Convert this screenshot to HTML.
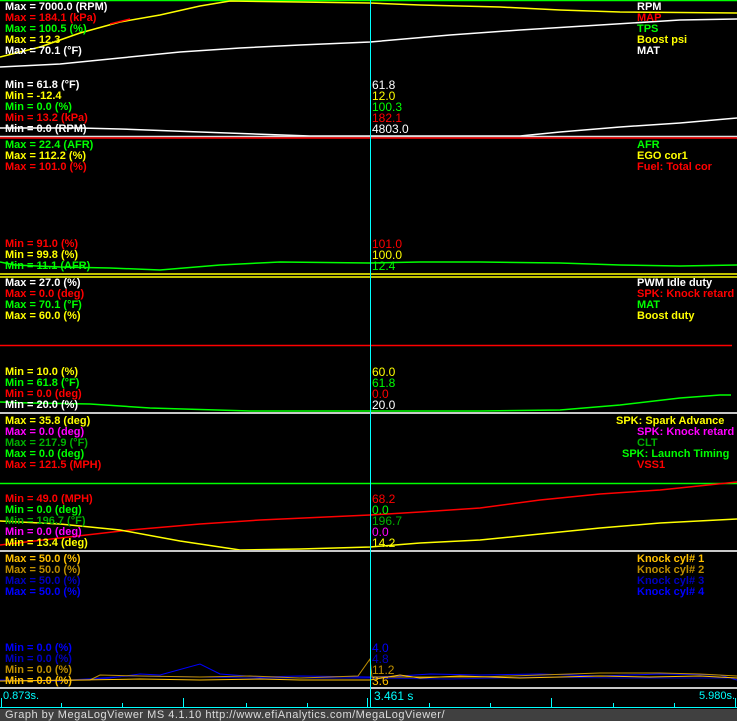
<!DOCTYPE html>
<html><head><meta charset="utf-8"><style>
body{margin:0;background:#000;width:737px;height:721px;overflow:hidden;position:relative;font-family:"Liberation Sans",sans-serif}
.t{position:absolute;font-size:11px;font-weight:bold;line-height:11px;white-space:nowrap;margin-top:1px}
.v{position:absolute;font-size:12px;line-height:11px;white-space:nowrap;left:372px;margin-top:1px}
svg{position:absolute;left:0;top:0}
.w{color:#fff}.r{color:#f00}.g{color:#0f0}.y{color:#ff0}.dg{color:#00b000}.m{color:#f0f}.o{color:#ffc000}.gd{color:#c09000}.db{color:#0000c0}.b{color:#0000ff}
</style></head><body>
<svg width="737" height="721">
<g fill="none" stroke-width="1.5">
<line x1="0" y1="0.5" x2="737" y2="0.5" stroke="#0f0"/>
<polyline stroke="#ff0" points="0,57 40,47 80,33 120,22 160,15 200,6 230,1 370,3 420,5 500,7 560,10 620,12 737,13"/>
<polyline stroke="#f00" points="110,24 130,19" />
<polyline stroke="#fff" points="0,67 60,64 120,58 180,52 240,48 300,45 370,42 450,35 520,30 600,25 680,20 737,19"/>
<polyline stroke="#fff" points="0,128 80,128 120,129 200,132 310,136 520,136 560,132 620,127 680,123 737,118"/>
<line x1="0" y1="136.5" x2="737" y2="136.5" stroke="#ddd"/>
<line x1="0" y1="138" x2="737" y2="138" stroke="#f00"/>
<polyline stroke="#0f0" points="0,262 15,265 60,267 110,268 160,270 220,265 280,262 370,263 420,262 480,262 560,263 620,265 680,266 737,265"/>
<line x1="0" y1="274" x2="737" y2="274" stroke="#ff0"/>
<line x1="0" y1="277" x2="737" y2="277" stroke="#ff0"/>
<line x1="0" y1="345.5" x2="732" y2="345.5" stroke="#f00"/>
<polyline stroke="#0f0" points="0,402 30,403 90,404 150,408 250,411 370,411 480,411 560,410 620,405 680,398 720,395 731,395"/>
<line x1="0" y1="413" x2="737" y2="413" stroke="#c8c8c8" stroke-width="2"/>
<line x1="0" y1="483.5" x2="737" y2="483.5" stroke="#0f0"/>
<polyline stroke="#f00" points="0,545 60,538 130,530 200,524 260,520 370,515 420,512 480,508 540,500 600,494 660,490 737,482"/>
<polyline stroke="#ff0" points="0,521 60,524 120,530 180,541 240,550 300,549 370,547 420,543 480,540 540,534 600,528 660,523 737,519"/>
<line x1="0" y1="551" x2="737" y2="551" stroke="#c8c8c8" stroke-width="2"/>
<polyline stroke="#0000ff" stroke-width="1" points="0,680 60,681 110,678 140,674 160,675 200,664 220,674 260,677 300,676 370,677 400,676 430,674 480,675 540,674 600,676 660,674 720,675 737,680"/>
<polyline stroke="#0000c0" stroke-width="1" points="0,681 70,680 130,676 200,677 250,678 370,678 450,679 540,677 620,678 737,678"/>
<polyline stroke="#c09000" stroke-width="1" points="0,681 90,680 100,675 140,676 200,677 250,676 300,678 358,676 370,659 372,677 420,677 480,677 540,675 600,673 660,673 700,674 737,676"/>
<polyline stroke="#ffc000" stroke-width="1" points="0,681 80,680 140,679 200,680 260,679 300,680 370,680 400,675 420,678 460,676 520,678 560,677 600,676 650,677 700,676 737,678"/>
<line x1="0" y1="688" x2="737" y2="688" stroke="#c8c8c8" stroke-width="2"/>
</g>
<line x1="370.5" y1="0" x2="370.5" y2="708" stroke="#0ff"/>
<line x1="0" y1="707.5" x2="737" y2="707.5" stroke="#0ff"/>
<g stroke="#0ff">
<line x1="1.5" y1="698" x2="1.5" y2="708"/><line x1="183.5" y1="698" x2="183.5" y2="708"/><line x1="367.5" y1="698" x2="367.5" y2="708"/><line x1="551.5" y1="698" x2="551.5" y2="708"/><line x1="735.5" y1="698" x2="735.5" y2="708"/>
<line x1="61.5" y1="703" x2="61.5" y2="708"/><line x1="122.5" y1="703" x2="122.5" y2="708"/><line x1="246.5" y1="703" x2="246.5" y2="708"/><line x1="307.5" y1="703" x2="307.5" y2="708"/><line x1="429.5" y1="703" x2="429.5" y2="708"/><line x1="490.5" y1="703" x2="490.5" y2="708"/><line x1="613.5" y1="703" x2="613.5" y2="708"/><line x1="674.5" y1="703" x2="674.5" y2="708"/>
</g>
<rect x="0" y="709" width="737" height="12" fill="#404040"/>
</svg>

<div class="t w" style="left:5px;top:1px">Max = 7000.0 (RPM)</div>
<div class="t r" style="left:5px;top:12px">Max = 184.1 (kPa)</div>
<div class="t g" style="left:5px;top:23px">Max = 100.5 (%)</div>
<div class="t y" style="left:5px;top:34px">Max = 12.3</div>
<div class="t w" style="left:5px;top:45px">Max = 70.1 (°F)</div>
<div class="t w" style="left:5px;top:79px">Min = 61.8 (°F)</div>
<div class="t y" style="left:5px;top:90px">Min = -12.4</div>
<div class="t g" style="left:5px;top:101px">Min = 0.0 (%)</div>
<div class="t r" style="left:5px;top:112px">Min = 13.2 (kPa)</div>
<div class="t w" style="left:5px;top:123px">Min = 0.0 (RPM)</div>
<div class="v w" style="top:79px">61.8</div>
<div class="v y" style="top:90px">12.0</div>
<div class="v g" style="top:101px">100.3</div>
<div class="v r" style="top:112px">182.1</div>
<div class="v w" style="top:123px">4803.0</div>
<div class="t w" style="left:637px;top:1px">RPM</div>
<div class="t r" style="left:637px;top:12px">MAP</div>
<div class="t g" style="left:637px;top:23px">TPS</div>
<div class="t y" style="left:637px;top:34px">Boost psi</div>
<div class="t w" style="left:637px;top:45px">MAT</div>
<div class="t g" style="left:5px;top:139px">Max = 22.4 (AFR)</div>
<div class="t y" style="left:5px;top:150px">Max = 112.2 (%)</div>
<div class="t r" style="left:5px;top:161px">Max = 101.0 (%)</div>
<div class="t r" style="left:5px;top:238px">Min = 91.0 (%)</div>
<div class="t y" style="left:5px;top:249px">Min = 99.8 (%)</div>
<div class="t g" style="left:5px;top:260px">Min = 11.1 (AFR)</div>
<div class="v r" style="top:238px">101.0</div>
<div class="v y" style="top:249px">100.0</div>
<div class="v g" style="top:260px">12.4</div>
<div class="t g" style="left:637px;top:139px">AFR</div>
<div class="t y" style="left:637px;top:150px">EGO cor1</div>
<div class="t r" style="left:637px;top:161px">Fuel: Total cor</div>
<div class="t w" style="left:5px;top:277px">Max = 27.0 (%)</div>
<div class="t r" style="left:5px;top:288px">Max = 0.0 (deg)</div>
<div class="t g" style="left:5px;top:299px">Max = 70.1 (°F)</div>
<div class="t y" style="left:5px;top:310px">Max = 60.0 (%)</div>
<div class="t y" style="left:5px;top:366px">Min = 10.0 (%)</div>
<div class="t g" style="left:5px;top:377px">Min = 61.8 (°F)</div>
<div class="t r" style="left:5px;top:388px">Min = 0.0 (deg)</div>
<div class="t w" style="left:5px;top:399px">Min = 20.0 (%)</div>
<div class="v y" style="top:366px">60.0</div>
<div class="v g" style="top:377px">61.8</div>
<div class="v r" style="top:388px">0.0</div>
<div class="v w" style="top:399px">20.0</div>
<div class="t w" style="left:637px;top:277px">PWM Idle duty</div>
<div class="t r" style="left:637px;top:288px">SPK: Knock retard</div>
<div class="t g" style="left:637px;top:299px">MAT</div>
<div class="t y" style="left:637px;top:310px">Boost duty</div>
<div class="t y" style="left:5px;top:415px">Max = 35.8 (deg)</div>
<div class="t m" style="left:5px;top:426px">Max = 0.0 (deg)</div>
<div class="t dg" style="left:5px;top:437px">Max = 217.9 (°F)</div>
<div class="t g" style="left:5px;top:448px">Max = 0.0 (deg)</div>
<div class="t r" style="left:5px;top:459px">Max = 121.5 (MPH)</div>
<div class="t r" style="left:5px;top:493px">Min = 49.0 (MPH)</div>
<div class="t g" style="left:5px;top:504px">Min = 0.0 (deg)</div>
<div class="t dg" style="left:5px;top:515px">Min = 196.7 (°F)</div>
<div class="t m" style="left:5px;top:526px">Min = 0.0 (deg)</div>
<div class="t y" style="left:5px;top:537px">Min = 13.4 (deg)</div>
<div class="v r" style="top:493px">68.2</div>
<div class="v g" style="top:504px">0.0</div>
<div class="v dg" style="top:515px">196.7</div>
<div class="v m" style="top:526px">0.0</div>
<div class="v y" style="top:537px">14.2</div>
<div class="t y" style="left:616px;top:415px">SPK: Spark Advance</div>
<div class="t m" style="left:637px;top:426px">SPK: Knock retard</div>
<div class="t dg" style="left:637px;top:437px">CLT</div>
<div class="t g" style="left:622px;top:448px">SPK: Launch Timing</div>
<div class="t r" style="left:637px;top:459px">VSS1</div>
<div class="t o" style="left:5px;top:553px">Max = 50.0 (%)</div>
<div class="t gd" style="left:5px;top:564px">Max = 50.0 (%)</div>
<div class="t db" style="left:5px;top:575px">Max = 50.0 (%)</div>
<div class="t b" style="left:5px;top:586px">Max = 50.0 (%)</div>
<div class="t b" style="left:5px;top:642px">Min = 0.0 (%)</div>
<div class="t db" style="left:5px;top:653px">Min = 0.0 (%)</div>
<div class="t gd" style="left:5px;top:664px">Min = 0.0 (%)</div>
<div class="t o" style="left:5px;top:675px">Min = 0.0 (%)</div>
<div class="v b" style="top:642px">4.0</div>
<div class="v db" style="top:653px">4.8</div>
<div class="v gd" style="top:664px">11.2</div>
<div class="v o" style="top:675px">3.6</div>
<div class="t o" style="left:637px;top:553px">Knock cyl# 1</div>
<div class="t gd" style="left:637px;top:564px">Knock cyl# 2</div>
<div class="t db" style="left:637px;top:575px">Knock cyl# 3</div>
<div class="t b" style="left:637px;top:586px">Knock cyl# 4</div>
<div class="v" style="left:3px;top:690px;color:#0ff;font-size:11px">0.873s.</div>
<div class="v" style="left:374px;top:690px;color:#0ff;font-size:12px">3.461 s</div>
<div class="v" style="left:699px;top:690px;color:#0ff;font-size:11px">5.980s.</div>
<div class="v" style="left:5px;top:709px;color:#ddd;font-size:11px;letter-spacing:0.5px">Graph by MegaLogViewer MS 4.1.10 http://www.efiAnalytics.com/MegaLogViewer/</div>
</body></html>
